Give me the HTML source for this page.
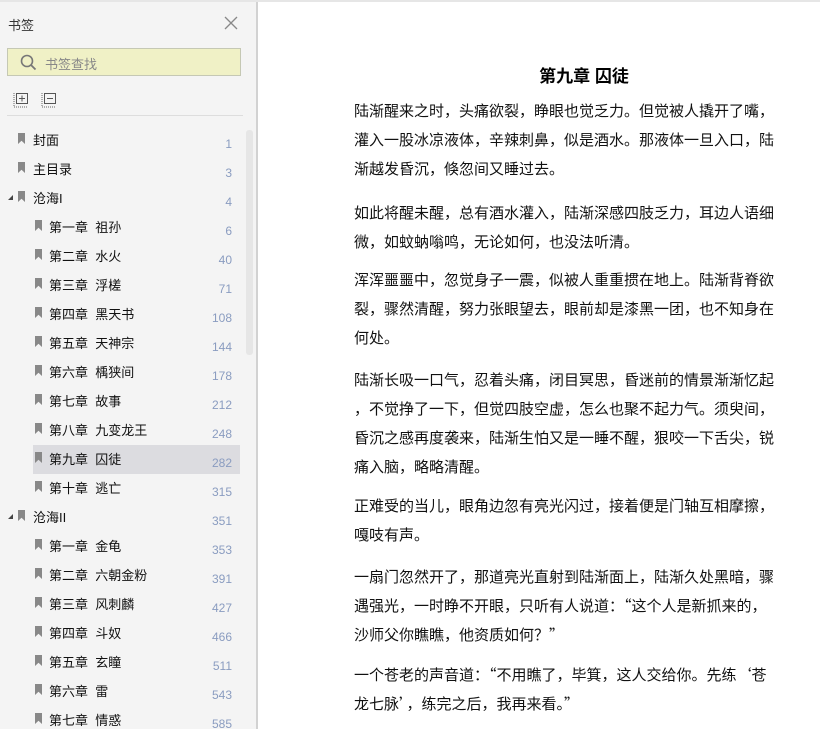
<!DOCTYPE html>
<html><head><meta charset="utf-8"><style>
body{margin:0;width:820px;height:729px;overflow:hidden;background:#fff;font-family:"Liberation Sans","Noto Sans CJK SC",sans-serif;position:relative}
#side{position:absolute;left:0;top:0;width:256px;height:729px;background:#f4f4f4;border-right:2px solid #d2d2d2}
#topline{position:absolute;left:0;top:0;width:820px;height:2px;background:#e6e6e6}
.hd{position:absolute;left:8px;top:15px;font-size:13px;color:#333}
.x{position:absolute;left:224px;top:16px;width:14px;height:14px}
.search{position:absolute;left:7px;top:48px;width:234px;height:28px;background:#f0f1c6;border:1px solid #c5c8b4;box-sizing:border-box}
.search span{position:absolute;left:37px;top:5px;font-size:13px;color:#888}
.sep{position:absolute;left:7px;top:115px;width:236px;height:1px;background:#ddd}
.track{position:absolute;left:246px;top:130px;width:7px;height:225px;background:#e6e6e6;border-radius:3px}
.row{position:absolute;height:29px;font-size:13px;color:#111;white-space:nowrap}
.row .t{position:absolute;top:3px}
.row .n{position:absolute;right:0;top:10px;color:#8a9cc0;font-size:12px}
.bm{position:absolute;top:6px;width:7px;height:11px;background:#888;clip-path:polygon(0 0,100% 0,100% 100%,50% 70%,0 100%)}
.tri{position:absolute;left:8px;top:10px;width:0;height:0;border-left:5px solid transparent;border-bottom:5px solid #444}
.hl{position:absolute;left:33px;top:445px;width:207px;height:29px;background:#dcdce0}
.l{position:absolute;left:354px;font-size:15px;color:#111;white-space:nowrap;line-height:20px;font-family:"Noto Sans CJK SC",sans-serif}
h1{position:absolute;left:0;width:1168px;text-align:center;top:62px;margin:0;font-size:17px;font-weight:bold}
</style></head><body>
<div id="side">
<div class="hd">书签</div>
<svg class="x" viewBox="0 0 14 14"><path d="M1 1L13 13M13 1L1 13" stroke="#888" stroke-width="1.3"/></svg>
<div class="search"><svg style="position:absolute;left:12px;top:5px" width="17" height="17" viewBox="0 0 17 17"><circle cx="7" cy="7" r="5.5" fill="none" stroke="#777" stroke-width="1.6"/><path d="M11 11L15.5 15.5" stroke="#777" stroke-width="1.8"/></svg><span>书签查找</span></div>
<svg style="position:absolute;left:13px;top:92px" width="16" height="16" viewBox="0 0 16 16"><path d="M1 1v14h14" fill="none" stroke="#666" stroke-dasharray="1 1"/><rect x="3.5" y="1.5" width="11" height="10" fill="none" stroke="#555"/><path d="M9 3.5v6M6 6.5h6" stroke="#555"/></svg>
<svg style="position:absolute;left:41px;top:92px" width="16" height="16" viewBox="0 0 16 16"><path d="M1 1v14h14" fill="none" stroke="#666" stroke-dasharray="1 1"/><rect x="3.5" y="1.5" width="11" height="10" fill="none" stroke="#555"/><path d="M6 6.5h6" stroke="#555"/></svg>
<div class="sep"></div>
<div class="track"></div>
<div class="hl"></div>
</div>
<div id="topline"></div>
<div id="rows"></div>
<h1>第九章 囚徒</h1>
<div class="l" style="top:101px">陆渐醒来之时，头痛欲裂，睁眼也觉乏力。但觉被人撬开了嘴，</div>
<div class="l" style="top:130px">灌入一股冰凉液体，辛辣刺鼻，似是酒水。那液体一旦入口，陆</div>
<div class="l" style="top:159px">渐越发昏沉，倏忽间又睡过去。</div>
<div class="l" style="top:203px">如此将醒未醒，总有酒水灌入，陆渐深感四肢乏力，耳边人语细</div>
<div class="l" style="top:232px">微，如蚊蚋嗡鸣，无论如何，也没法听清。</div>
<div class="l" style="top:270px">浑浑噩噩中，忽觉身子一震，似被人重重掼在地上。陆渐背脊欲</div>
<div class="l" style="top:299px">裂，骤然清醒，努力张眼望去，眼前却是漆黑一团，也不知身在</div>
<div class="l" style="top:328px">何处。</div>
<div class="l" style="top:370px">陆渐长吸一口气，忍着头痛，闭目冥思，昏迷前的情景渐渐忆起</div>
<div class="l" style="top:399px">，不觉挣了一下，但觉四肢空虚，怎么也聚不起力气。须臾间，</div>
<div class="l" style="top:428px">昏沉之感再度袭来，陆渐生怕又是一睡不醒，狠咬一下舌尖，锐</div>
<div class="l" style="top:457px">痛入脑，略略清醒。</div>
<div class="l" style="top:496px">正难受的当儿，眼角边忽有亮光闪过，接着便是门轴互相摩擦，</div>
<div class="l" style="top:525px">嘎吱有声。</div>
<div class="l" style="top:567px">一扇门忽然开了，那道亮光直射到陆渐面上，陆渐久处黑暗，骤</div>
<div class="l" style="top:596px">遇强光，一时睁不开眼，只听有人说道：“这个人是新抓来的，</div>
<div class="l" style="top:625px">沙师父你瞧瞧，他资质如何？”</div>
<div class="l" style="top:665px">一个苍老的声音道：“不用瞧了，毕箕，这人交给你。先练‘苍</div>
<div class="l" style="top:694px">龙七脉’，练完之后，我再来看。”</div>
<script>
var d=[[0,"封面",1],[0,"主目录",3],[2,"沧海I",4],[1,"第一章  祖孙",6],[1,"第二章  水火",40],[1,"第三章  浮槎",71],[1,"第四章  黑天书",108],[1,"第五章  天神宗",144],[1,"第六章  楀狭间",178],[1,"第七章  故事",212],[1,"第八章  九变龙王",248],[1,"第九章  囚徒",282],[1,"第十章  逃亡",315],[2,"沧海II",351],[1,"第一章  金龟",353],[1,"第二章  六朝金粉",391],[1,"第三章  风刺麟",427],[1,"第四章  斗奴",466],[1,"第五章  玄瞳",511],[1,"第六章  雷",543],[1,"第七章  情惑",585]];
var h="";d.forEach(function(r,i){var y=127+i*29;var ix=r[0]==1?35:18,tx=r[0]==1?49:33;
h+='<div class="row" style="left:0;top:'+y+'px;width:232px">'+(r[0]==2?'<div class="tri"></div>':'')+'<div class="bm" style="left:'+ix+'px"></div><div class="t" style="left:'+tx+'px">'+r[1].replace(/  /g,'&nbsp;&nbsp;')+'</div><div class="n">'+r[2]+'</div></div>';});
document.getElementById("rows").innerHTML=h;
</script>
</body></html>
